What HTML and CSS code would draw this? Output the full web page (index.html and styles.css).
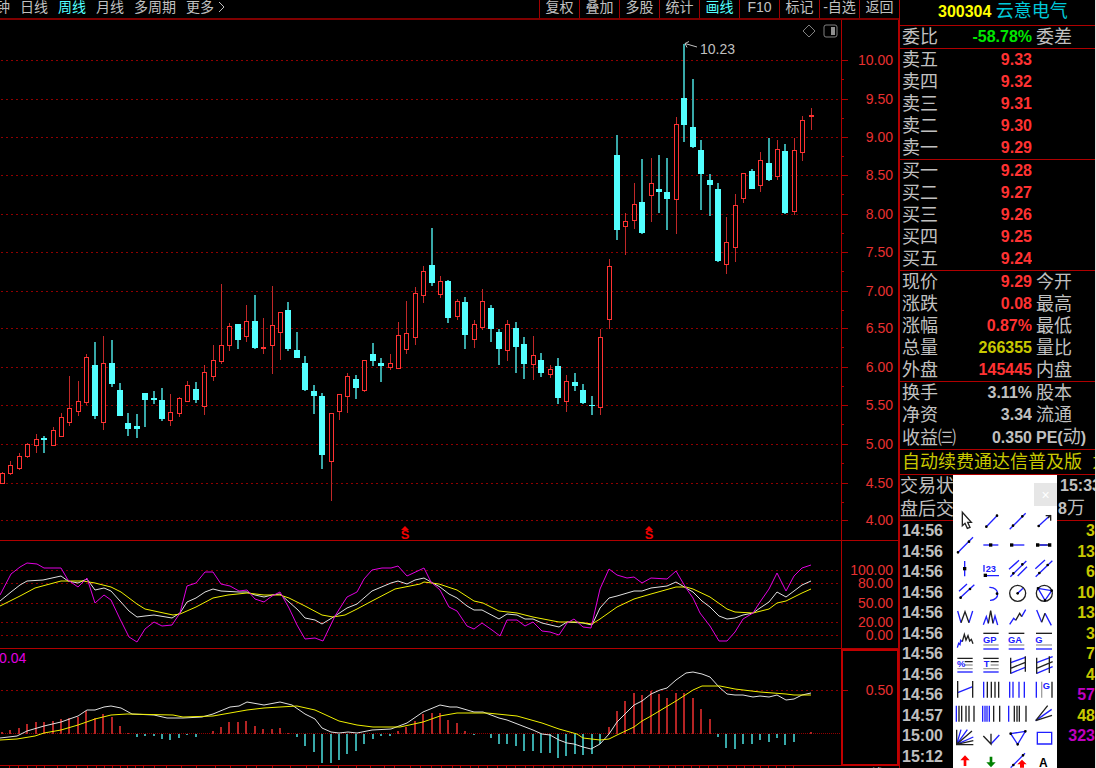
FILE: index.html
```
<!DOCTYPE html>
<html lang="zh-CN">
<head>
    <meta charset="UTF-8">
    <meta name="viewport" content="width=device-width, initial-scale=1.0">
    <title>300304 云意电气</title>
    <link rel="stylesheet" href="styles.css">
</head>
<body>
    <div class="app">
        <main class="main">
            <nav class="toolbar">
                <div class="periods">
                    <button>钟</button>
                    <button>日线</button>
                    <button class="active">周线</button>
                    <button>月线</button>
                    <button>多周期</button>
                    <button>更多<svg class="more" viewBox="0 0 7 12"><path d="M1 1l5 5-5 5"/></svg></button>
                </div>
                <div class="tools">
                    <button>复权</button>
                    <button>叠加</button>
                    <button>多股</button>
                    <button>统计</button>
                    <button class="active">画线</button>
                    <button>F10</button>
                    <button>标记</button>
                    <button>-自选</button>
                    <button>返回</button>
                </div>
            </nav>

            <svg class="pane" id="price" viewBox="0 20 899 521">
                <g class="grid"></g>
                <g class="axis"></g>
                <g class="candles"></g>
                <path class="note-line" d="M685 43.500l12 3.500M685 43.500l4-2M685 43.500l2 4"/>
                <text class="note" x="700" y="54">10.23</text>
                <path class="icon-gray" d="M809 25l6 6-6 6-6-6z"/>
                <rect class="icon-gray" x="824" y="25" width="13" height="12" rx="2"/>
                <rect class="icon-fill" x="831" y="27" width="4" height="8"/>
                <path class="mark" d="M401 530l4-4 4 4z"/>
                <text class="mark" x="405" y="539">S</text>
                <path class="mark" d="M645 530l4-4 4 4z"/>
                <text class="mark" x="649" y="539">S</text>
            </svg>

            <svg class="pane" id="kdj" viewBox="0 541 899 108">
                <g class="grid"></g>
                <g class="axis"></g>
                <polyline class="line-white" points="0,601 11,592 20,585 27,581 43,580 61,576 68,581 78,583 87,579 95,590 104,588 111,591 120,601 129,611 137,617 145,616 154,615 172,618 180,613 187,602 196,598 205,592 213,589 221,591 239,592 247,592 255,595 264,597 272,595 280,594 289,602 298,610 305,618 315,620 322,624 335,616 347,608 357,604 372,591 391,583 398,581 407,584 415,580 424,578 431,582 440,587 449,594 457,598 467,606 474,610 482,610 499,619 507,614 517,615 525,619 533,619 542,623 559,627 567,622 583,623 592,625 600,608 609,598 617,596 634,591 642,591 651,588 667,586 676,582 686,588 693,592 702,601 710,607 719,616 727,619 735,618 743,615 753,613 760,608 769,602 777,592 786,597 794,591 802,585 811,581"/>
                <polyline class="line-yellow" points="0,606 20,596 35,588 61,581 83,581 95,583 111,587 121,592 137,604 145,609 173,615 180,614 196,607 213,598 228,595 247,593 264,595 280,595 289,598 305,606 322,615 333,617 345,615 357,609 372,601 395,589 420,584 424,582 439,584 457,590 474,601 483,603 499,611 517,613 533,617 559,622 577,622 592,624 600,619 617,607 634,599 651,594 676,587 686,587 693,589 710,597 727,609 735,612 753,613 769,609 777,603 786,601 802,593 811,589"/>
                <polyline class="line-magenta" points="0,595 11,574 20,567 27,563 37,564 44,568 61,568 68,580 78,587 87,578 95,603 104,595 111,600 120,619 129,637 137,642 145,629 154,622 162,626 172,625 180,613 187,586 196,583 205,572 213,572 221,584 230,586 239,591 247,590 255,599 264,602 272,596 280,592 289,608 297,625 305,639 315,638 323,641 335,616 347,597 357,592 364,579 372,570 382,568 391,568 398,566 407,576 424,568 431,582 440,590 449,607 457,611 467,626 474,629 482,623 492,630 500,636 507,620 517,620 525,626 533,622 542,631 550,632 559,635 567,623 574,619 583,627 591,628 600,589 609,569 617,575 627,578 634,577 642,583 651,578 667,579 676,571 686,588 693,598 700,613 710,626 719,641 727,641 735,632 743,619 753,613 760,602 769,589 777,573 786,591 794,576 802,568 811,565"/>
            </svg>

            <svg class="pane" id="macd" viewBox="0 649 899 119">
                <g class="grid"></g>
                <g class="axis"></g>
                <g class="bars"></g>
                <polyline class="line-white" points="0,738 17,736 27,731 44,726 61,722 78,716 87,710 95,710 104,707 111,706 121,708 132,714 154,715 167,718 183,718 202,717 213,714 230,707 239,706 247,702 264,705 280,702 292,705 305,714 315,719 322,728 331,732 339,733 348,732 357,733 372,730 391,729 407,723 423,712 440,705 450,707 457,707 474,712 483,712 499,718 507,720 533,730 542,734 550,735 559,740 567,743 574,744 583,747 591,749 600,744 609,734 617,722 634,705 642,701 651,694 660,690 667,688 676,680 686,673 693,672 702,674 710,677 719,687 727,694 735,695 743,695 753,697 760,696 769,697 777,695 786,700 794,699 802,695 811,693"/>
                <polyline class="line-yellow" points="0,740 17,739 35,736 44,733 61,730 78,725 95,719 111,715 127,714 173,715 183,717 213,716 230,713 247,710 264,708 280,707 297,706 315,710 339,721 357,725 373,727 400,727 423,722 440,716 457,713 487,713 517,716 542,723 559,729 577,734 583,738 600,740 609,739 617,735 634,727 642,721 651,716 676,701 693,690 702,686 720,686 735,689 760,692 786,694 794,695 811,695"/>
                <text class="value" x="-1" y="663">0.04</text>
                <rect class="axis-box" x="842" y="650" width="56" height="115"/>
                <text class="period" x="856" y="779">周线</text>
            </svg>
        </main>

        <aside class="quote">
            <h1 class="stock"><span class="code">300304</span> <span class="name">云意电气</span></h1>

            <table class="rows">
                <tr><th>委比</th><td class="green">-58.78%</td><th>委差</th></tr>
            </table>
            <table class="rows">
                <tr><th>卖五</th><td class="red">9.33</td><th></th></tr>
                <tr><th>卖四</th><td class="red">9.32</td><th></th></tr>
                <tr><th>卖三</th><td class="red">9.31</td><th></th></tr>
                <tr><th>卖二</th><td class="red">9.30</td><th></th></tr>
                <tr><th>卖一</th><td class="red">9.29</td><th></th></tr>
            </table>
            <table class="rows">
                <tr><th>买一</th><td class="red">9.28</td><th></th></tr>
                <tr><th>买二</th><td class="red">9.27</td><th></th></tr>
                <tr><th>买三</th><td class="red">9.26</td><th></th></tr>
                <tr><th>买四</th><td class="red">9.25</td><th></th></tr>
                <tr><th>买五</th><td class="red">9.24</td><th></th></tr>
            </table>
            <table class="rows">
                <tr><th>现价</th><td class="red">9.29</td><th>今开</th></tr>
                <tr><th>涨跌</th><td class="red">0.08</td><th>最高</th></tr>
                <tr><th>涨幅</th><td class="red">0.87%</td><th>最低</th></tr>
                <tr><th>总量</th><td class="yellow">266355</td><th>量比</th></tr>
                <tr><th>外盘</th><td class="red">145445</td><th>内盘</th></tr>
            </table>
            <table class="rows">
                <tr><th>换手</th><td>3.11%</td><th>股本</th></tr>
                <tr><th>净资</th><td>3.34</td><th>流通</th></tr>
                <tr><th>收益㈢</th><td>0.350</td><th><b>PE(</b>动<b>)</b></th></tr>
            </table>
            <p class="banner">自动续费通达信普及版 &nbsp;为</p>
            <table class="rows status">
                <tr><th>交易状态</th><td>15:33</td></tr>
                <tr><th>盘后交易</th><td>8<span class="unit">万</span></td></tr>
            </table>

            <div class="ticks">
                <table>
                    <tr><th>14:56</th><td>3</td></tr>
                    <tr><th>14:56</th><td>13</td></tr>
                    <tr><th>14:56</th><td>6</td></tr>
                    <tr><th>14:56</th><td>10</td></tr>
                    <tr><th>14:56</th><td>13</td></tr>
                    <tr><th>14:56</th><td>3</td></tr>
                    <tr><th>14:56</th><td>7</td></tr>
                    <tr><th>14:56</th><td>4</td></tr>
                    <tr><th>14:56</th><td class="magenta">57</td></tr>
                    <tr><th>14:57</th><td>48</td></tr>
                    <tr><th>15:00</th><td class="magenta">323</td></tr>
                    <tr><th>15:12</th><td></td></tr>
                </table>
            </div>
        </aside>
    </div>

    <!-- floating drawing tools -->
    <section class="palette">
        <header><button class="close" aria-label="关闭">×</button></header>
        <div class="palette-grid">
            <button aria-label="选择"><svg viewBox="0 0 78 72"><path class="k" d="M31 10V50L39 43 46 58 54 55 47 40H58Z"/></svg></button>
            <button aria-label="线段"><svg viewBox="0 0 78 72"><path d="M25 53L57 20"/><path class="d" d="M25 53h0M57 20h0"/></svg></button>
            <button aria-label="直线"><svg viewBox="0 0 78 72"><path d="M17 61L65 13"/><path class="d" d="M27 50h0M55 22h0"/></svg></button>
            <button aria-label="箭头"><svg viewBox="0 0 78 72"><path d="M25 52L61 19"/><path class="k" d="M47 20H62V35M62 19L54 27"/><path class="d" d="M26 51h0"/></svg></button>

            <button aria-label="射线"><svg viewBox="0 0 78 72"><path d="M17 59L63 13"/><path class="d" d="M18 58h0M51 26h0"/></svg></button>
            <button aria-label="水平线"><svg viewBox="0 0 78 72"><path d="M16 36H61"/><path class="D" d="M38 36h0"/></svg></button>
            <button aria-label="水平射线"><svg viewBox="0 0 78 72"><path d="M22 36H61"/><path class="D" d="M23 36h0"/></svg></button>
            <button aria-label="水平线段"><svg viewBox="0 0 78 72"><path class="k" d="M21 36H60"/><path d="M30 36H52"/><path class="D" d="M23 36h0M59 36h0"/></svg></button>

            <button aria-label="垂直线"><svg viewBox="0 0 78 72"><path d="M38 12V58"/><path class="D" d="M38 35h0"/></svg></button>
            <button aria-label="价格标注"><svg viewBox="0 0 78 72"><path d="M18 24V44M21 56H63"/><text x="23" y="45">23</text><path class="D" d="M22 55h0"/></svg></button>
            <button aria-label="平行线"><svg viewBox="0 0 78 72"><path d="M15 37L45 10M19 59L67 12M41 57L69 29"/><path class="d" d="M28 49h0M55 22h0"/></svg></button>
            <button aria-label="平行射线"><svg viewBox="0 0 78 72"><path d="M16 35L45 9M17 59L67 11"/><path class="d" d="M28 48h0M53 24h0"/></svg></button>

            <button aria-label="平行线段"><svg viewBox="0 0 78 72"><path d="M21 31L45 9M23 52L67 11"/><path class="d" d="M26 50h0M54 24h0"/></svg></button>
            <button aria-label="圆弧"><svg viewBox="0 0 78 72"><path d="M34 19C67 17 67 59 36 58"/><path class="d" d="M57 38h0"/></svg></button>
            <button aria-label="圆"><svg viewBox="0 0 78 72"><circle class="k" cx="41" cy="37" r="24"/><path d="M41 37L57 22"/><path class="d" d="M41 37h0"/></svg></button>
            <button aria-label="外接圆"><svg viewBox="0 0 78 72"><circle class="k" cx="43" cy="37" r="24"/><path d="M24 22L65 29 45 58Z"/><path class="d" d="M24 22h0M65 29h0M45 58h0"/></svg></button>

            <button aria-label="W形"><svg viewBox="0 0 78 72"><path d="M17 18L27 53M51 53L62 18"/><path class="k" d="M27 53L39 20 51 53"/></svg></button>
            <button aria-label="头肩形"><svg viewBox="0 0 78 72"><path d="M16 59L25 35 31 55M45 55L51 33 59 60"/><path class="k" d="M31 55L38 17 45 55"/></svg></button>
            <button aria-label="五浪线"><svg viewBox="0 0 78 72"><path d="M17 58L29 40 35 46M53 35L65 14"/><path class="k" d="M35 46L47 25 53 35"/></svg></button>
            <button aria-label="三浪线"><svg viewBox="0 0 78 72"><path d="M20 15L35 52M45 25L64 61"/><path class="k" d="M35 52L45 25"/></svg></button>

            <button aria-label="波浪线"><svg viewBox="0 0 78 72"><path d="M16 56L20 43 24 47 26 34 31 38"/><path class="k" d="M31 38L37 16 42 33 48 20 53 36 58 31 63 44"/></svg></button>
            <button aria-label="GP"><svg viewBox="0 0 78 72"><path class="k" d="M16 13H62"/><path class="g" d="M16 48H62"/><path d="M16 60H62"/><text x="15" y="41">GP</text></svg></button>
            <button aria-label="GA"><svg viewBox="0 0 78 72"><path class="k" d="M14 13H61"/><path class="g" d="M14 48H61"/><path d="M14 60H61"/><text x="12" y="41">GA</text></svg></button>
            <button aria-label="G"><svg viewBox="0 0 78 72"><path class="k" d="M18 13H66"/><path class="g" d="M18 48H66"/><path d="M18 60H66"/><text x="16" y="41">G</text></svg></button>

            <button aria-label="百分比线"><svg viewBox="0 0 78 72"><path class="k" d="M16 16H62M38 26H62"/><path class="g" d="M38 36H62M16 47H62"/><path d="M16 57H62"/><text x="15" y="41">%</text></svg></button>
            <button aria-label="T线"><svg viewBox="0 0 78 72"><path class="k" d="M16 16H62M38 26H62"/><path class="g" d="M38 36H62M16 47H62"/><path d="M16 57H62"/><text x="17" y="41">T</text></svg></button>
            <button aria-label="通道线"><svg viewBox="0 0 78 72"><path d="M20 29L64 13M20 61L64 43"/><path class="k" d="M20 14V62M64 10V56M20 46L64 28"/></svg></button>
            <button aria-label="回归通道"><svg viewBox="0 0 78 72"><path d="M20 29L68 11M20 61L68 41"/><path class="k" d="M20 14V62M58 10V60M20 46L68 26"/></svg></button>

            <button aria-label="回归线"><svg viewBox="0 0 78 72"><path d="M17 47L62 29"/><path class="k" d="M17 12V62M62 12V62"/></svg></button>
            <button aria-label="周期线"><svg viewBox="0 0 78 72"><path d="M17 14V62"/><path class="k" d="M28 14V62M40 14V62M51 14V62M62 14V62"/></svg></button>
            <button aria-label="费波拉契"><svg viewBox="0 0 78 72"><path d="M17 14V62M27 14V62M45 14V62M61 14V62"/></svg></button>
            <button aria-label="阶梯线"><svg viewBox="0 0 78 72"><path d="M19 14V62"/><path class="g" d="M35 14V62"/><path class="k" d="M66 14V62"/><text x="38" y="37">G</text></svg></button>

            <button aria-label="江恩时间"><svg viewBox="0 0 78 72"><path d="M13 14V62"/><path class="k" d="M21 14V62M29 14V62M42 14V62M51 14V62M66 14V62"/></svg></button>
            <button aria-label="密集周期"><svg viewBox="0 0 78 72"><path d="M14 14V62M21 14V62M27 14V62M34 14V62"/><path class="k" d="M47 14V62M65 14V62"/></svg></button>
            <button aria-label="对称周期"><svg viewBox="0 0 78 72"><path d="M14 14V62"/><path class="k" d="M31 14V62M39 14V62M46 14V62M66 14V62"/></svg></button>
            <button aria-label="速阻线"><svg viewBox="0 0 78 72"><path d="M17 59L65 25"/><path class="k" d="M17 59L53 14M17 59L66 43"/></svg></button>

            <button aria-label="江恩角度"><svg viewBox="0 0 78 72"><path d="M14 58L27 14M14 58L46 14M14 58L64 36"/><path class="k" d="M14 14V59H64M14 58L60 18M14 58L64 47"/></svg></button>
            <button aria-label="角度线"><svg viewBox="0 0 78 72"><path d="M39 57L64 30"/><path class="k" d="M16 33L39 57V26"/></svg></button>
            <button aria-label="三角形"><svg viewBox="0 0 78 72"><path d="M20 26L64 19 41 58Z"/><path class="d" d="M20 26h0M64 19h0M41 58h0"/></svg></button>
            <button aria-label="矩形"><svg viewBox="0 0 78 72"><path d="M22 22H65V57H22Z"/></svg></button>

            <button aria-label="上箭头"><svg viewBox="0 0 78 72"><path class="up" d="M39 19L53 34H43V51H35V34H25Z"/></svg></button>
            <button aria-label="下箭头"><svg viewBox="0 0 78 72"><path class="down" d="M39 55L53 40H43V23H35V40H25Z"/></svg></button>
            <button aria-label="趋势标记"><svg viewBox="0 0 78 72"><path d="M20 56L63 13"/><path class="d" d="M28 48h0M57 19h0"/><path class="up" d="M54 32L68 46H60V56H48V46H40Z"/></svg></button>
            <button aria-label="文字"><svg viewBox="0 0 78 72"><text class="big" x="27" y="54">A</text></svg></button>
        </div>
    </section>

    <script src="chart.js"></script>
</body>
</html>
```
FILE: styles.css
```
body {
    margin: 0;
    background: #000;
    color: #c0c0c0;
    font-family: "Liberation Sans", "Noto Sans CJK SC", sans-serif;
    font-size: 14px;
    overflow: hidden;
    position: relative;
    height: 100vh;
}
button {
    margin: 0;
    padding: 0;
    border: 0;
    background: none;
    color: inherit;
    font: inherit;
    white-space: nowrap;
}
.app {
    display: flex;
    height: 100vh;
}
.main {
    flex: 1;
    min-width: 0;
    overflow: hidden;
}

/* top bar */
.toolbar {
    display: flex;
    justify-content: space-between;
    height: 18px;
    border-bottom: 2px solid #800000;
}
.toolbar button {
    line-height: 14px;
    height: 18px;
    padding-bottom: 4px;
}
.toolbar .active {
    color: #52ffff;
}
.periods {
    display: flex;
    gap: 10px;
    margin-left: -4px;
}
.more {
    width: 7px;
    height: 12px;
    margin-left: 4px;
    vertical-align: -1px;
    fill: none;
    stroke: #c0c0c0;
}
.tools {
    display: flex;
}
.tools button {
    width: 40px;
    border-left: 1px solid #a00000;
}

/* charts */
.pane {
    display: block;
    width: 100%;
    height: auto;
}
.pane text {
    font-size: 14px;
    fill: #c0c0c0;
}
.grid path {
    stroke: #900000;
    stroke-dasharray: 2 3;
    shape-rendering: crispEdges;
}
.grid .zero {
    stroke-dasharray: 1 1;
}
.axis path {
    stroke: #b00000;
    fill: none;
    shape-rendering: crispEdges;
}
.pane .axis text {
    fill: #e83030;
    text-anchor: end;
}
.axis-box {
    fill: none;
    stroke: #c00000;
    stroke-width: 2;
}
.candles, .bars {
    shape-rendering: crispEdges;
}
.rise path {
    stroke: #c02828;
    stroke-width: 1;
}
.rise rect {
    fill: #000;
    stroke: #ff3232;
}
.fall path {
    stroke: #38a8a8;
    stroke-width: 2;
}
.fall rect {
    fill: #52ffff;
}
.bars .pos {
    stroke: #b42424;
    stroke-width: 2;
}
.bars .neg {
    stroke: #38a8a8;
    stroke-width: 2;
}
polyline {
    fill: none;
    stroke-width: 1;
}
.line-white {
    stroke: #e0e0e0;
}
.line-yellow {
    stroke: #f0f000;
}
.line-magenta {
    stroke: #e000e0;
}
.note-line, .icon-gray {
    fill: none;
    stroke: #808080;
}
.note-line {
    stroke: #c0c0c0;
}
.icon-fill {
    fill: #909090;
}
.pane .mark {
    fill: #f00000;
    font-weight: bold;
    font-size: 13px;
    text-anchor: middle;
}
.pane .value {
    fill: #e000e0;
}

/* quote column */
.quote {
    position: relative;
    display: flex;
    flex-direction: column;
    width: 195px;
    overflow: hidden;
    border-left: 1px solid #b00000;
    border-right: 1px solid #e0e0e0;
}
.stock {
    margin: 0;
    height: 25px;
    padding-left: 38px;
    line-height: 22px;
    border-bottom: 1px solid #b00000;
    white-space: nowrap;
    font-size: 16px;
}
.code {
    color: #ffff00;
}
.name {
    color: #00c8d8;
    font-size: 18px;
    font-weight: normal;
}
.rows {
    width: 100%;
    flex: none;
    table-layout: fixed;
    border-collapse: separate;
    border-spacing: 0;
    border-bottom: 1px solid #b00000;
}
.rows th, .rows td {
    height: 22px;
    padding: 0;
    line-height: 22px;
    white-space: nowrap;
    overflow: hidden;
}
.rows th {
    width: 60px;
    padding-left: 2px;
    text-align: left;
    font-size: 18px;
    font-weight: normal;
}
.rows td {
    width: 70px;
    text-align: right;
    font-size: 16px;
    font-weight: bold;
}
.rows td + th {
    width: auto;
    padding-left: 4px;
}
.rows b {
    font-size: 16px;
}
.red {
    color: #ff3232;
}
.green {
    color: #00e600;
}
.yellow {
    color: #c8c800;
}
.banner {
    flex: none;
    margin: 0;
    padding-left: 2px;
    height: 24px;
    line-height: 24px;
    border-bottom: 1px solid #b00000;
    color: #c8c800;
    font-size: 18px;
    white-space: nowrap;
    overflow: hidden;
}
.status th {
    width: 156px;
    padding-left: 0;
}
.status td {
    width: auto;
    text-align: left;
    padding-left: 2px;
}
.status tr:first-child td {
    padding-left: 4px;
}
.unit {
    font-size: 18px;
    font-weight: normal;
}
.ticks {
    flex: 1;
    min-height: 0;
    padding-bottom: 1px;
}
.ticks table {
    width: 100%;
    height: 100%;
    border-spacing: 0;
    font-size: 16px;
    font-weight: bold;
    line-height: 18px;
}
.ticks th, .ticks td {
    padding: 0;
}
.ticks th {
    padding-left: 2px;
    text-align: left;
}
.ticks td {
    text-align: right;
    color: #c8c800;
}
.ticks .magenta {
    color: #c000c0;
}

/* drawing tools window */
.palette {
    position: absolute;
    top: 475px;
    right: 39px;
    bottom: 0;
    width: 104px;
    overflow: hidden;
    background: #fff;
}
.palette header {
    display: flex;
    justify-content: flex-end;
    padding: 8px 0 3px;
}
.close {
    width: 23px;
    height: 23px;
    background: #e6e6e6;
    color: #fff;
}
.palette-grid {
    display: grid;
    grid-template-columns: repeat(4, 26px);
    grid-auto-rows: 24px;
    margin-left: -1px;
}
.palette svg {
    display: block;
    width: 26px;
    height: 24px;
    fill: none;
    stroke: #2020ff;
    stroke-width: 4;
}
.palette .k {
    stroke: #202020;
}
.palette .g {
    stroke: #a0a0a0;
}
.palette .d {
    stroke: #000;
    stroke-width: 8;
    stroke-linecap: round;
}
.palette .D {
    stroke: #000;
    stroke-width: 10;
    stroke-linecap: square;
}
.palette text {
    fill: #2020ff;
    stroke: none;
    font-size: 28px;
    font-weight: bold;
}
.palette .big {
    fill: #000;
    font-size: 36px;
}
.palette .up {
    fill: #f00;
    stroke: none;
}
.palette .down {
    fill: #008000;
    stroke: none;
}
```
FILE: chart.js
```
// type (r = rise, f = fall), high, body top, body bottom, low
var candles = [
    ["r",472,473,483,483],["r",461,465,473,474],["r",453,456,468,469],["r",443,444,456,457],
    ["r",434,439,445,452],["f",436,438,440,453],["r",427,430,445,445],["r",413,417,436,436],
    ["r",376,408,422,425],["r",381,401,411,415],["r",354,357,402,404],["f",342,365,416,419],
    ["r",336,363,422,429],["f",340,363,384,387],["f",383,390,416,416],["f",413,423,429,436],
    ["f",414,426,429,438],["f",393,393,400,427],["f",391,398,400,404],["f",388,400,419,421],
    ["r",394,412,420,425],["r",397,398,413,416],["r",381,385,401,401],["f",382,389,400,403],
    ["r",365,372,406,414],["r",345,360,376,380],["r",284,345,361,363],["r",323,326,345,350],
    ["f",324,324,340,349],["r",305,321,336,341],["f",295,321,348,349],["r",318,347,348,353],
    ["r",286,325,345,373],["r",312,312,332,359],["f",302,310,349,351],["f",332,350,358,358],
    ["f",356,363,390,391],["f",385,391,396,414],["f",393,396,455,469],["r",413,413,461,500],
    ["r",394,394,411,419],["r",373,376,396,412],["f",375,379,388,399],["r",360,360,390,391],
    ["f",343,354,361,366],["f",358,363,366,382],["r",354,363,367,369],["r",322,335,368,368],
    ["r",301,333,349,353],["r",287,293,337,344],["r",266,271,295,302],["f",228,265,283,286],
    ["r",276,281,294,297],["f",280,281,318,323],["r",299,301,316,319],["f",297,302,335,349],
    ["r",320,324,339,347],["r",289,301,327,329],["f",305,308,329,342],["f",329,332,349,365],
    ["r",320,324,350,360],["f",322,328,347,373],["f",337,344,364,379],["r",336,355,364,379],
    ["f",353,360,373,377],["r",365,369,374,377],["f",358,366,398,404],["r",375,381,401,411],
    ["f",373,382,386,391],["f",384,390,403,404],["f",396,405,406,415],["r",329,337,407,414],
    ["r",259,266,319,328],["f",135,155,230,240],["r",213,221,226,254],["r",183,204,220,228],
    ["f",159,202,233,234],["r",158,183,195,221],["f",155,189,192,213],["f",158,192,199,230],
    ["r",117,124,199,233],["f",44,98,125,142],["f",79,127,147,148],["f",140,150,174,210],
    ["f",174,180,185,216],["f",183,189,261,262],["r",217,242,264,273],["r",194,205,247,261],
    ["r",173,173,198,202],["f",169,171,189,189],["r",152,160,185,191],["f",138,163,180,181],
    ["r",140,149,176,179],["f",144,151,213,214],["r",138,150,211,214],["r",116,120,152,160],
    ["r",108,115,116,129]
];

var macd = [
    2,4,6,10,12,12,13,15,16,17,23,16,20,17,8,1,-3,-2,-2,-5,-6,-4,-1,-3,0,3,7,12,12,13,8,5,
    5,6,1,-3,-12,-18,-29,-29,-26,-20,-17,-10,-5,-2,-2,3,7,13,20,21,21,14,11,3,-1,0,-4,-10,
    -10,-12,-17,-17,-19,-19,-24,-22,-20,-21,-20,-10,7,23,33,41,39,43,40,36,41,41,36,25,15,
    -3,-14,-15,-10,-10,-6,-8,-4,-11,-8,0,2
];

var AXIS_X = 841;

function barX(i) {
    return Math.round(2 + i * 8.424);
}

function fill(id, cls, html) {
    document.querySelector("#" + id + " ." + cls).innerHTML = html;
}

function gridLine(y, cls) {
    return '<path class="' + (cls || "") + '" d="M1 ' + (y + 0.5) + 'H' + AXIS_X + '"/>';
}

function label(y, text) {
    return '<text x="893" y="' + (y + 5) + '">' + text + '</text>';
}

function tick(y, len) {
    return '<path d="M' + AXIS_X + ' ' + (y + 0.5) + 'h' + len + '"/>';
}

// price pane
var levels = [60, 99, 137, 175, 214, 252, 291, 328, 367, 405, 444, 483, 520];
var grid = "";
var axis = '<path d="M841.5 20V541M898.5 20V541M0 540.5H899"/>';
levels.forEach(function (y, i) {
    grid += gridLine(y);
    axis += tick(y, 7) + label(y, (10 - i * 0.5).toFixed(2));
    if (i < levels.length - 1) {
        axis += tick(y + 19, 3);
    }
});
fill("price", "grid", grid);
fill("price", "axis", axis);

fill("price", "candles", candles.map(function (c, i) {
    var x = barX(i);
    if (c[0] === "r") {
        return '<g class="rise"><path d="M' + (x + 0.5) + ' ' + c[1] + 'V' + (c[4] + 1) + '"/>' +
            '<rect x="' + (x - 1.5) + '" y="' + (c[2] + 0.5) + '" width="4" height="' + (c[3] - c[2]) + '"/></g>';
    }
    return '<g class="fall"><path d="M' + x + ' ' + c[1] + 'V' + c[4] + '"/>' +
        '<rect x="' + (x - 3) + '" y="' + c[2] + '" width="6" height="' + (c[3] - c[2]) + '"/></g>';
}).join(""));

// kdj pane
var kdj = [[570, "100.00"], [583, "80.00"], [603, "50.00"], [622, "20.00"], [635, "0.00"]];
fill("kdj", "grid", kdj.map(function (k) { return gridLine(k[0]); }).join(""));
fill("kdj", "axis", '<path d="M841.5 541V649M898.5 541V649M0 648.5H899"/>' +
    kdj.map(function (k) { return label(k[0], k[1]); }).join(""));

// macd pane
fill("macd", "grid", gridLine(690) + gridLine(733, "zero"));
var dates = "";
[9, 18, 27, 36, 44, 57, 66, 76, 87, 96, 104, 112, 120, 127, 135, 143, 154, 166, 181, 196, 215, 230, 246, 256,
    272, 290, 306, 318, 338, 356, 370, 384, 394, 410, 420, 431, 441, 452, 460, 470, 478, 487, 497, 506, 515, 525,
    533, 543, 553, 563, 572, 582, 592, 606, 622, 634, 649, 659, 668, 675, 683, 691, 699, 708, 717, 727, 736, 744,
    753, 760, 768, 776, 785, 793].forEach(function (x) {
    dates += 'M' + (x + 0.5) + ' 766V768';
});
fill("macd", "axis", '<path d="M0 765.5H899' + dates + '"/>' + tick(690, 7) + label(690, "0.50"));

fill("macd", "bars", macd.map(function (v, i) {
    var x = barX(i);
    return v ? '<path class="' + (v > 0 ? "pos" : "neg") + '" d="M' + x + ' 733.5v' + (-v) + '"/>' : "";
}).join(""));
```
